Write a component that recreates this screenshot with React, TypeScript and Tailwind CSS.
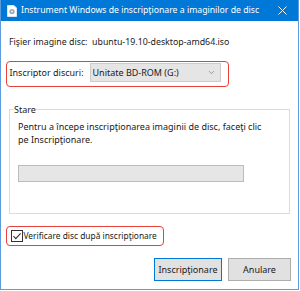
import { ChevronDown } from 'lucide-react';

function DiscIcon() {
    return (
        <svg width="10" height="12" viewBox="0 0 10 12" className="shrink-0">
            <path d="M0.5 0.5h6.5l2.5 2.5v8.5h-9z" fill="#ffffff" stroke="#d9e6f2" />
            <circle cx="5" cy="6.5" r="2.6" fill="#9aa7b3" />
            <circle cx="5" cy="6.5" r="0.9" fill="#ffffff" />
        </svg>
    );
}

export default function App() {
    return (
        <div className="w-[300px] h-[291px] bg-white text-[9px] leading-[13px] text-[#1a1a1a]" style={{ fontFamily: '"Noto Sans", "Open Sans", sans-serif' }}>
            <div className="w-[299px] h-[290px] border border-t-0 border-[#5c9bdc] flex flex-col">
                {/* Title bar */}
                <div className="h-[21px] bg-[#0078d7] flex items-center pl-[6px] pr-[6px] text-white">
                    <DiscIcon />
                    <span className="ml-[4px] text-[8.7px] whitespace-nowrap">Instrument Windows de inscripţionare a imaginilor de disc</span>
                    <svg width="9" height="9" viewBox="0 0 9 9" className="ml-auto mr-[5px]">
                        <path d="M0.5 0.5l8 8M8.5 0.5l-8 8" stroke="#ffffff" strokeWidth="1" />
                    </svg>
                </div>

                {/* Body */}
                <div className="flex-1 flex flex-col px-[5px]">
                    <div className="mt-[15px] pl-[3px] whitespace-nowrap text-[8.8px]">
                        Fişier imagine disc:&nbsp;&nbsp;ubuntu-19.10-desktop-amd64.iso
                    </div>

                    <div className="mt-[12px] w-[223px] h-[26px] border-[1.5px] border-[#e8413a] rounded-[4px] flex items-start pt-[1px]">
                        <span className="ml-[2.5px] w-[80px] leading-[19px]">Inscriptor discuri:</span>
                        <div className="w-[131px] h-[19px] bg-[#e5e5e5] border border-[#cccccc] flex items-center pl-[2px] pr-[4px]">
                            <span>Unitate BD-ROM (G:)</span>
                            <ChevronDown className="ml-auto w-[9px] h-[9px] text-[#606060]" strokeWidth={1.5} />
                        </div>
                    </div>

                    <fieldset className="mt-[15.5px] ml-[3px] w-[281px] border border-[#dcdcdc] pb-[31px]">
                        <legend className="ml-[4px]">Stare</legend>
                        <div className="pl-[8px] mt-[4px]">
                            <p>Pentru a începe inscripţionarea imaginii de disc, faceţi clic</p>
                            <p>pe Inscripţionare.</p>
                            <div className="mt-[19px] w-[226px] h-[17px] bg-[#e6e6e6] border border-[#bcbcbc]" />
                        </div>
                    </fieldset>

                    <div className="mt-[12px] w-[158px] h-[20px] border-[1.5px] border-[#e8413a] rounded-[4px] flex items-center">
                        <div className="ml-[3.5px] w-[12px] h-[12px] border border-[#333333] bg-white flex items-center justify-center">
                            <svg width="10" height="10" viewBox="0 0 10 10">
                                <path d="M1.5 5.2l2.3 2.4 4.8-5.2" fill="none" stroke="#333333" strokeWidth="1.1" />
                            </svg>
                        </div>
                        <span className="ml-[1px] whitespace-nowrap text-[8.4px]">Verificare disc după inscripţionare</span>
                    </div>

                    <div className="mt-[12px] flex justify-end gap-[6px] mr-[2px]">
                        <button className="w-[68px] h-[23px] bg-[#e1e1e1] border border-[#0078d7]">Inscripţionare</button>
                        <button className="w-[63px] h-[23px] bg-[#e1e1e1] border border-[#adadad]">Anulare</button>
                    </div>
                </div>
            </div>
        </div>
    );
}
